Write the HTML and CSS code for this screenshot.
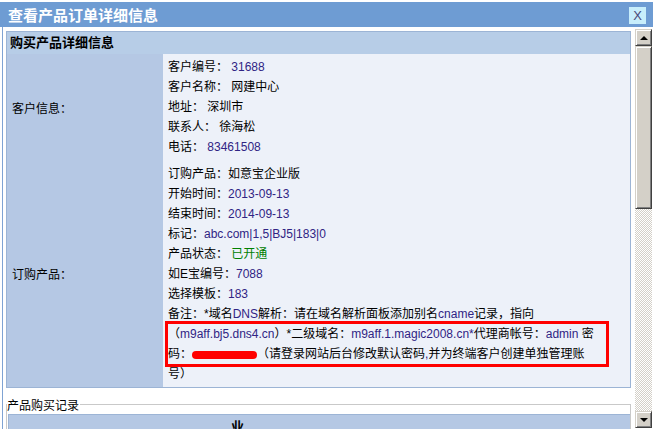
FILE: index.html
```html
<!DOCTYPE html>
<html lang="zh-CN">
<head>
<meta charset="UTF-8">
<title>查看产品订单详细信息</title>
<link rel="stylesheet" href="styles.css">
</head>
<body>

<div class="page-strip"></div>
<div class="dialog">
    <div class="dialog-title">
        <span>查看产品订单详细信息</span>
        <span class="close-btn">X</span>
    </div>
    <div class="dialog-body">
        <div class="frame">
            <table class="detail-table">
                <tr>
                    <th colspan="2">购买产品详细信息</th>
                </tr>
                <tr class="row-customer">
                    <td class="label">客户信息：</td>
                    <td class="value">
                        <div>客户编号： <span class="v">31688</span></div>
                        <div>客户名称： 网建中心</div>
                        <div>地址： 深圳市</div>
                        <div>联系人： 徐海松</div>
                        <div>电话： <span class="v">83461508</span></div>
                    </td>
                </tr>
                <tr class="row-order">
                    <td class="label">订购产品：</td>
                    <td class="value">
                        <div>订购产品：如意宝企业版</div>
                        <div>开始时间：<span class="v">2013-09-13</span></div>
                        <div>结束时间：<span class="v">2014-09-13</span></div>
                        <div>标记：<span class="v">abc.com|1,5|BJ5|183|0</span></div>
                        <div>产品状态： <span class="ok">已开通</span></div>
                        <div>如E宝编号：<span class="v">7088</span></div>
                        <div>选择模板：<span class="v">183</span></div>
                        <div class="note">
                            备注：*域名<span class="v">DNS</span>解析：请在域名解析面板添加别名<span class="v">cname</span>记录，指向<br>
                            （<span class="v">m9aff.bj5.dns4.cn</span>）*二级域名：<span class="v">m9aff.1.magic2008.cn*</span>代理商帐号：<span class="v">admin</span> 密<br>
                            码：<span class="redact"></span>（请登录网站后台修改默认密码<span class="v">,</span>并为终端客户创建单独管理账<br>
                            号）
                            <span class="mark"></span>
                        </div>
                    </td>
                </tr>
            </table>

            <fieldset class="records">
                <legend>产品购买记录</legend>
                <div class="records-head">业</div>
            </fieldset>
        </div>

        <div class="scrollbar">
            <div class="sb-btn sb-up"></div>
            <div class="sb-btn sb-thumb"></div>
            <div class="sb-track"></div>
            <div class="sb-btn sb-down"></div>
        </div>
    </div>
</div>

</body>
</html>
```

FILE: styles.css
```css
body {
    margin: 0;
    background: #fff;
    color: #000;
    font-family: "Liberation Sans", "Noto Sans CJK SC", sans-serif;
    font-size: 12px;
    overflow: hidden;
}
.page-strip {
    height: 2px;
}
.dialog-title {
    height: 25px;
    background: #6e9cd3;
    color: #fff;
    font-size: 15px;
    font-weight: bold;
    display: flex;
    align-items: center;
    justify-content: space-between;
    padding: 0 7px 0 8px;
}
.close-btn {
    width: 17px;
    height: 17px;
    margin-top: 2px;
    background: #c8eefb;
    color: #4a4a78;
    font-size: 13px;
    font-weight: normal;
    line-height: 17px;
    text-align: center;
}
.dialog-body {
    height: 402px;
    margin-left: 2px;
    border-left: 1px solid #7fa3d3;
    display: flex;
    overflow: hidden;
}
.frame {
    flex: 1;
    padding: 4px 4px 0 3px;
    overflow: hidden;
}
.detail-table {
    width: 625px;
    border-collapse: separate;
    border-spacing: 0;
    border: 1px solid #9cb4d5;
}
.detail-table th {
    height: 22px;
    padding: 0 3px;
    background: #b7cde7;
    font-size: 13px;
    font-weight: bold;
    line-height: 22px;
    text-align: left;
}
.label {
    width: 146px;
    padding: 0 5px;
    background: #b5c8e4;
    vertical-align: middle;
}
.value {
    padding: 3px 5px;
    background: #edf1f9;
    line-height: 20px;
    vertical-align: top;
}
.row-order .value {
    padding-top: 4px;
}
.v {
    color: #302484;
}
.ok {
    color: #008000;
}
.note {
    position: relative;
}
.redact {
    display: inline-block;
    width: 65px;
    height: 8px;
    background: #f00;
    border-radius: 4px;
    vertical-align: middle;
}
.mark {
    position: absolute;
    left: -3px;
    top: 17px;
    width: 444px;
    height: 46px;
    box-sizing: border-box;
    border: 3px solid #f00;
}
.records {
    width: 625px;
    box-sizing: border-box;
    margin: 6px 0 0;
    padding: 0;
    border: 1px solid #c9c9c9;
    border-bottom: none;
}
.records legend {
    padding: 4px 1px 0 0;
    line-height: 16px;
}
.records-head {
    height: 24px;
    margin-left: 1px;
    padding-left: 222px;
    background: #b5c8e4;
    border-top: 1px solid #9cb4d5;
    border-left: 1px solid #9cb4d5;
    font-size: 13px;
    font-weight: bold;
    line-height: 24px;
}
.scrollbar {
    width: 17px;
    height: 399px;
    margin: 2px 1px 0 0;
    display: flex;
    flex-direction: column;
}
.sb-btn {
    height: 17px;
    box-sizing: border-box;
    background: #d4d0c8;
    border: 1px solid;
    border-color: #d4d0c8 #404040 #404040 #d4d0c8;
    box-shadow: inset 1px 1px #fff, inset -1px -1px #808080;
    display: flex;
    align-items: center;
    justify-content: center;
}
.sb-thumb {
    height: 163px;
}
.sb-up::before,
.sb-down::before {
    content: "";
    width: 0;
    height: 0;
    border-left: 4px solid transparent;
    border-right: 4px solid transparent;
}
.sb-up::before {
    border-bottom: 4px solid #000;
}
.sb-down::before {
    border-top: 4px solid #000;
}
.sb-track {
    flex: 1;
    background: repeating-conic-gradient(#d4d0c8 0 25%, #fff 0 50%) 0 0 / 2px 2px;
}
```
